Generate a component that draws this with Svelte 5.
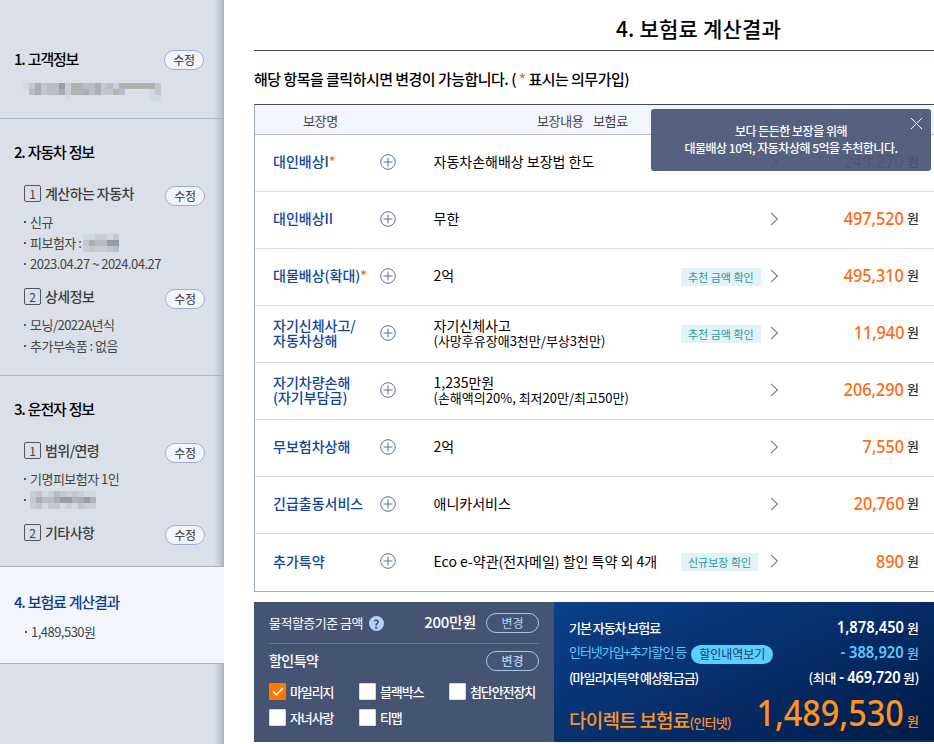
<script lang="ts">
    type Group = { title: string; items: (string | { label: string; mask: string[] })[] };
    type Section = {
        title: string;
        editable?: boolean;
        active?: boolean;
        mask?: string[];
        items?: string[];
        groups?: Group[];
    };

    // masked values are rows of 6px cells, one letter per shade
    const shades: Record<string, string> = {
        a: "#d3d9e1",
        b: "#cbced4",
        c: "#c3c6cb",
        d: "#b9bcc2",
        e: "#a9aeb5",
        f: "#989ca7",
        g: "#b3b2b2",
        h: "#b5c0ce",
    };

    const nameMask = ["acecddfbgghdecdbggggggc", ".decddebggedeccgh....ac", ".......a.............aa"];
    const insuredMask = ["aabbac", "ceddff", "bcbbch"];
    const driverMask = ["bcabdcbcbaa", "ceddeffgefg", "bcaccabacbb"];

    const sections: Section[] = [
        { title: "1. 고객정보", editable: true, mask: nameMask },
        {
            title: "2. 자동차 정보",
            groups: [
                {
                    title: "계산하는 자동차",
                    items: ["신규", { label: "피보험자 :", mask: insuredMask }, "2023.04.27 ~ 2024.04.27"],
                },
                { title: "상세정보", items: ["모닝/2022A년식", "추가부속품 : 없음"] },
            ],
        },
        {
            title: "3. 운전자 정보",
            groups: [
                { title: "범위/연령", items: ["기명피보험자 1인", { label: "", mask: driverMask }] },
                { title: "기타사항", items: [] },
            ],
        },
        { title: "4. 보험료 계산결과", active: true, items: ["1,489,530원"] },
    ];

    const coverages = [
        { name: ["대인배상I"], required: true, detail: "자동차손해배상 보장법 한도", price: "249,270" },
        { name: ["대인배상II"], detail: "무한", price: "497,520" },
        { name: ["대물배상(확대)"], required: true, detail: "2억", badge: "추천 금액 확인", price: "495,310" },
        {
            name: ["자기신체사고/", "자동차상해"],
            detail: "자기신체사고",
            note: "(사망후유장애3천만/부상3천만)",
            badge: "추천 금액 확인",
            price: "11,940",
        },
        {
            name: ["자기차량손해", "(자기부담금)"],
            detail: "1,235만원",
            note: "(손해액의20%, 최저20만/최고50만)",
            price: "206,290",
        },
        { name: ["무보험차상해"], detail: "2억", price: "7,550" },
        { name: ["긴급출동서비스"], detail: "애니카서비스", price: "20,760" },
        { name: ["추가특약"], detail: "Eco e-약관(전자메일) 할인 특약 외 4개", badge: "신규보장 확인", price: "890" },
    ];

    let discounts = $state([
        { label: "마일리지", checked: true },
        { label: "블랙박스", checked: false },
        { label: "첨단안전장치", checked: false },
        { label: "자녀사랑", checked: false },
        { label: "티맵", checked: false },
    ]);

    let tipOpen = $state(true);
</script>

{#snippet mosaic(rows: string[])}
    <svg class="mosaic" width={rows[0].length * 6} height={rows.length * 6} shape-rendering="crispEdges">
        {#each rows as row, y}
            {#each row.split("") as cell, x}
                {#if shades[cell]}
                    <rect x={x * 6} y={y * 6} width="6" height="6" fill={shades[cell]} />
                {/if}
            {/each}
        {/each}
    </svg>
{/snippet}

<div class="page">
    <aside>
        {#each sections as section}
            <section class:active={section.active}>
                <div class="section-head">
                    <h2>{section.title}</h2>
                    {#if section.editable}
                        <button class="edit">수정</button>
                    {/if}
                </div>
                {#if section.mask}
                    <div class="masked">{@render mosaic(section.mask)}</div>
                {/if}
                {#if section.items}
                    <ul>
                        {#each section.items as item}
                            <li>{item}</li>
                        {/each}
                    </ul>
                {/if}
                {#each section.groups ?? [] as group, i}
                    <div class="group-head">
                        <span class="num">{i + 1}</span>
                        <h3>{group.title}</h3>
                        <button class="edit">수정</button>
                    </div>
                    {#if group.items.length}
                        <ul>
                            {#each group.items as item}
                                {#if typeof item === "string"}
                                    <li>{item}</li>
                                {:else}
                                    <li>
                                        {#if item.label}<span class="item-label">{item.label}</span>{/if}
                                        {@render mosaic(item.mask)}
                                    </li>
                                {/if}
                            {/each}
                        </ul>
                    {/if}
                {/each}
            </section>
        {/each}
    </aside>

    <main>
        <h1>4. 보험료 계산결과</h1>
        <p class="guide">해당 항목을 클릭하시면 변경이 가능합니다. ( <em>*</em> 표시는 의무가입)</p>

        <div class="table">
            <div class="thead">
                <span class="th-name">보장명</span>
                <span class="th-detail">보장내용</span>
                <span>보험료</span>
            </div>
            {#each coverages as row}
                <div class="row">
                    <div class="name">
                        {#each row.name as line, i}
                            <span>{line}{#if row.required && i === 0}<em>*</em>{/if}</span>
                        {/each}
                    </div>
                    <svg class="plus" width="16" height="16" viewBox="0 0 16 16">
                        <circle cx="8" cy="8" r="7.3" />
                        <path d="M8 3.5v9M3.5 8h9" />
                    </svg>
                    <div class="detail">
                        <span>{row.detail}</span>
                        {#if row.note}
                            <span class="note">{row.note}</span>
                        {/if}
                    </div>
                    {#if row.badge}
                        <div class="badge-cell"><span class="badge">{row.badge}</span></div>
                    {/if}
                    <svg class="chevron" width="9" height="14" viewBox="0 0 9 14">
                        <path d="M1 .8 7.4 7 1 13.2" />
                    </svg>
                    <div class="price"><b>{row.price}</b><span>원</span></div>
                </div>
            {/each}

            {#if tipOpen}
                <div class="tip">
                    <p>보다 든든한 보장을 위해<br />대물배상 10억, 자동차상해 5억을 추천합니다.</p>
                    <button class="close" aria-label="닫기" onclick={() => (tipOpen = false)}>
                        <svg width="13" height="13" viewBox="0 0 13 13"><path d="M1 1l11 11M12 1 1 12" /></svg>
                    </button>
                </div>
            {/if}
        </div>

        <div class="summary">
            <div class="options">
                <div class="base">
                    <span class="base-label">물적할증기준 금액</span>
                    <span class="help">?</span>
                    <strong>200만원</strong>
                    <button class="change">변경</button>
                </div>
                <div class="discount-head">
                    <span>할인특약</span>
                    <button class="change">변경</button>
                </div>
                <div class="checks">
                    {#each discounts as discount}
                        <label>
                            <input type="checkbox" bind:checked={discount.checked} />
                            <span class="box">
                                {#if discount.checked}
                                    <svg width="12" height="9" viewBox="0 0 12 9"><path d="M1 4.3 4.3 7.7 11 1" /></svg>
                                {/if}
                            </span>
                            {discount.label}
                        </label>
                    {/each}
                </div>
            </div>

            <div class="total">
                <div class="line">
                    <span>기본 자동차 보험료</span>
                    <span class="amount"><b>1,878,450</b> 원</span>
                </div>
                <div class="line sky">
                    <span class="sky-label">인터넷가입+추가할인 등</span>
                    <button class="history">할인내역보기</button>
                    <span class="amount"><b>- 388,920</b> 원</span>
                </div>
                <div class="line refund">
                    <span>(마일리지특약 예상환급금)</span>
                    <span class="amount"><span class="max">(최대</span> <b>- 469,720</b> 원)</span>
                </div>
                <div class="final">
                    <span class="final-label">다이렉트 보험료<small>(인터넷)</small></span>
                    <span class="final-price"><b>1,489,530</b> 원</span>
                </div>
            </div>
        </div>
    </main>
</div>

<style>
    :global(body) {
        overflow: hidden;
        background: #fff;
    }

    .page {
        display: flex;
        width: 934px;
        height: 744px;
        overflow: hidden;
        color: #000;
        font-family: "Noto Sans CJK KR", sans-serif;
        font-size: 14px;
        white-space: nowrap;
    }

    h1,
    h2,
    h3,
    p,
    ul {
        margin: 0;
        padding: 0;
        font-weight: 500;
    }

    button {
        box-sizing: border-box;
        padding: 0;
        font: inherit;
        cursor: pointer;
    }

    em {
        color: #ff6a13;
        font-style: normal;
    }

    /* sidebar */
    aside {
        flex: none;
        width: 224px;
        background: linear-gradient(to left, #a9b3c2 0, #c3cad5 4px, #d3d8e1 8px, #dbe0e8 11px);
    }

    section {
        border-bottom: 1px solid #aab5c1;
        padding: 22px 19px 19px 14px;
    }
    section:first-child {
        padding: 48px 20px 17px 14px;
    }
    section:nth-child(3) {
        padding-bottom: 23px;
    }
    section.active {
        padding: 24px 19px 21px 14px;
        background: #f2f5fb;
    }

    .section-head,
    .group-head {
        display: flex;
        align-items: center;
        justify-content: space-between;
        height: 21px;
    }

    h2 {
        font-size: 15px;
        line-height: 20px;
        letter-spacing: -0.08em;
        word-spacing: 1px;
    }
    .active h2 {
        color: #0b3f8c;
    }

    .group-head {
        height: 22px;
        margin-top: 20px;
        padding-left: 10px;
    }
    ul + .group-head {
        margin-top: 11px;
    }

    h3 {
        flex: 1;
        color: #3d3d3d;
        font-size: 14px;
        line-height: 20px;
        letter-spacing: -0.04em;
    }

    .num {
        box-sizing: border-box;
        width: 17px;
        height: 17px;
        margin-right: 4px;
        border: 1px solid #4d5562;
        border-radius: 2px;
        color: #444;
        font-size: 12px;
        line-height: 16px;
        text-align: center;
    }

    .edit {
        width: 40px;
        height: 20px;
        margin-top: 2px;
        border: 1px solid #a1abd8;
        border-radius: 10px;
        background: #f2f5fb;
        color: #333;
        font-size: 12px;
        line-height: 16px;
        letter-spacing: -0.03em;
    }
    .group-head .edit {
        margin-top: 6px;
    }

    .masked {
        height: 18px;
        margin: 14px 0 0 9px;
    }

    .mosaic {
        display: block;
        flex: none;
    }

    ul {
        margin: 7px 0 0 10px;
        list-style: none;
    }
    .active ul {
        margin: 9px 0 0 11px;
    }

    li {
        display: flex;
        align-items: center;
        height: 21px;
        color: #444;
        font-size: 13px;
        font-weight: 400;
        letter-spacing: -0.04em;
    }
    li::before {
        content: "";
        width: 2px;
        height: 2px;
        margin-right: 4px;
        background: #3c5a8c;
    }
    .item-label {
        margin-right: 2px;
    }

    /* content */
    main {
        flex: none;
        width: 680px;
        margin-left: 30px;
    }

    h1 {
        box-sizing: border-box;
        height: 51px;
        padding-left: 209px;
        border-bottom: 1px solid #3f4b5b;
        font-size: 21px;
        line-height: 56px;
        letter-spacing: 0.01em;
        text-align: center;
    }

    .guide {
        height: 53px;
        font-size: 15px;
        line-height: 56px;
        letter-spacing: -0.035em;
    }

    .table {
        position: relative;
        border: solid #9da9b5;
        border-width: 0 0 1px 1px;
        border-top: 1px solid #3f4b5b;
    }

    .thead {
        display: flex;
        height: 29px;
        border-bottom: 1px solid #b7c1ce;
        background: #f2f5fb;
        color: #444;
        font-size: 13px;
        line-height: 31px;
        letter-spacing: -0.03em;
    }
    .th-name {
        width: 234px;
        padding-left: 48px;
    }
    .th-detail {
        width: 56px;
    }

    .row {
        display: flex;
        align-items: center;
        height: 56px;
        padding-left: 18px;
        border-bottom: 1px solid #dbdee2;
    }
    .row:nth-child(9) {
        height: 57px;
        border-bottom: 0;
    }

    .name {
        display: flex;
        flex-direction: column;
        width: 107px;
        margin-top: -3px;
        color: #104699;
        font-weight: 500;
        line-height: 15px;
    }

    .plus,
    .chevron {
        flex: none;
        margin-top: -3px;
        fill: none;
        stroke: #53709a;
    }
    .chevron {
        margin-right: 60px;
        stroke: #6b7ba3;
        stroke-width: 1.1;
    }

    .detail {
        display: flex;
        flex: 1;
        flex-direction: column;
        margin: -3px 0 0 37.5px;
        line-height: 15px;
    }
    .note {
        font-size: 13px;
    }

    .badge-cell {
        width: 89px;
        margin-top: -3px;
    }
    .badge {
        display: inline-block;
        height: 18px;
        padding: 0 7px;
        background: #e2f2f6;
        color: #2b98a8;
        font-size: 11px;
        line-height: 18px;
    }

    .price {
        display: flex;
        align-items: center;
        justify-content: flex-end;
        width: 80px;
        margin: -4px 15px 0 0;
        color: #333;
        font-size: 13px;
        font-weight: 500;
        line-height: 24px;
    }
    .price span {
        margin-left: 3px;
    }

    /* amounts use narrowed figures */
    .price b,
    .amount b,
    .final-price b {
        display: inline-block;
        font-family: "Noto Sans", sans-serif;
        font-weight: 500;
        transform: scaleX(0.9);
        transform-origin: right;
    }
    .price b {
        color: #ff6a13;
        font-size: 18px;
    }

    .tip {
        position: absolute;
        top: 4px;
        right: 3px;
        box-sizing: border-box;
        width: 280px;
        height: 62px;
        padding-top: 13px;
        border-radius: 3px;
        background: rgba(70, 84, 117, 0.92);
        color: #fff;
        font-size: 12px;
        line-height: 17px;
        letter-spacing: -0.042em;
        text-align: center;
    }

    .close {
        position: absolute;
        top: 8px;
        right: 8px;
        width: 13px;
        height: 13px;
        border: 0;
        background: none;
    }
    .close svg {
        display: block;
        fill: none;
        stroke: #fff;
    }

    /* bottom panels */
    .summary {
        display: flex;
        height: 140px;
        margin-top: 10px;
        color: #fff;
    }

    .options {
        box-sizing: border-box;
        width: 300px;
        padding: 0 15px;
        background: #465473;
    }

    .base {
        display: flex;
        align-items: center;
        height: 41px;
        border-bottom: 1px solid #66738f;
    }
    .base-label {
        font-size: 13px;
        letter-spacing: -0.04em;
    }
    .help {
        width: 15px;
        height: 15px;
        margin: 2px 0 0 6px;
        border-radius: 50%;
        background: #b4d2fc;
        color: #465473;
        font-size: 12px;
        font-weight: 700;
        line-height: 15px;
        text-align: center;
    }
    .base strong {
        flex: 1;
        margin: -2px 10px 0 0;
        font-size: 15px;
        font-weight: 500;
        letter-spacing: -0.02em;
        text-align: right;
    }

    .change {
        width: 53px;
        height: 20px;
        border: 1px solid #a9c8f0;
        border-radius: 10px;
        background: none;
        color: #b4d2fc;
        font-size: 12px;
        line-height: 16px;
    }

    .discount-head {
        display: flex;
        align-items: center;
        justify-content: space-between;
        height: 34px;
        font-size: 14px;
        font-weight: 500;
        letter-spacing: -0.04em;
    }
    .discount-head span {
        margin-top: -2px;
    }

    .checks {
        display: grid;
        grid-template-columns: 90px 90px 90px;
        grid-auto-rows: 26px;
    }

    label {
        display: flex;
        align-items: center;
        font-size: 13px;
        font-weight: 500;
        letter-spacing: -0.085em;
    }
    label input {
        display: none;
    }
    .box {
        display: flex;
        align-items: center;
        justify-content: center;
        box-sizing: border-box;
        width: 17px;
        height: 17px;
        margin-right: 4px;
        border: 1px solid #d5d9e0;
        border-radius: 1px;
        background: #fff;
    }
    input:checked + .box {
        border-color: #ff7800;
        background: #ff7800;
    }
    .box svg {
        fill: none;
        stroke: #fff;
        stroke-width: 1.5;
    }

    .total {
        box-sizing: border-box;
        width: 380px;
        padding: 13px 15px 0;
        border-bottom: 2px solid #0a2f6b;
        background: linear-gradient(155deg, #0b4089 0%, #07306f 45%, #001b46 100%);
    }

    .line {
        display: flex;
        align-items: center;
        height: 25px;
        font-size: 13px;
        font-weight: 500;
        letter-spacing: -0.08em;
    }
    .sky {
        color: #5cc9ff;
        font-weight: 400;
    }
    .sky-label {
        margin-top: -3px;
    }
    .amount {
        flex: 1;
        font-weight: 500;
        letter-spacing: 0;
        line-height: 22px;
        text-align: right;
    }
    .amount b {
        font-size: 16px;
        font-weight: 600;
        transform: scaleX(0.92);
    }
    .refund .amount {
        letter-spacing: -0.02em;
    }
    .max {
        margin-right: -5px;
    }

    .history {
        width: 82px;
        height: 19px;
        margin: 3px 0 0 5px;
        border: 0;
        border-radius: 10px;
        background: #57cfff;
        color: #1d3a66;
        font-size: 12px;
        line-height: 18px;
    }

    .final {
        display: flex;
        align-items: baseline;
        justify-content: space-between;
        height: 48px;
        color: #ff931e;
        font-weight: 500;
        line-height: 46px;
    }
    .final-label {
        position: relative;
        top: 2px;
        font-size: 19px;
        letter-spacing: -0.04em;
    }
    .final-label small {
        font-size: 13px;
        letter-spacing: -0.06em;
    }
    .final-price {
        font-size: 13px;
    }
    .final-price b {
        font-size: 36px;
    }
</style>
